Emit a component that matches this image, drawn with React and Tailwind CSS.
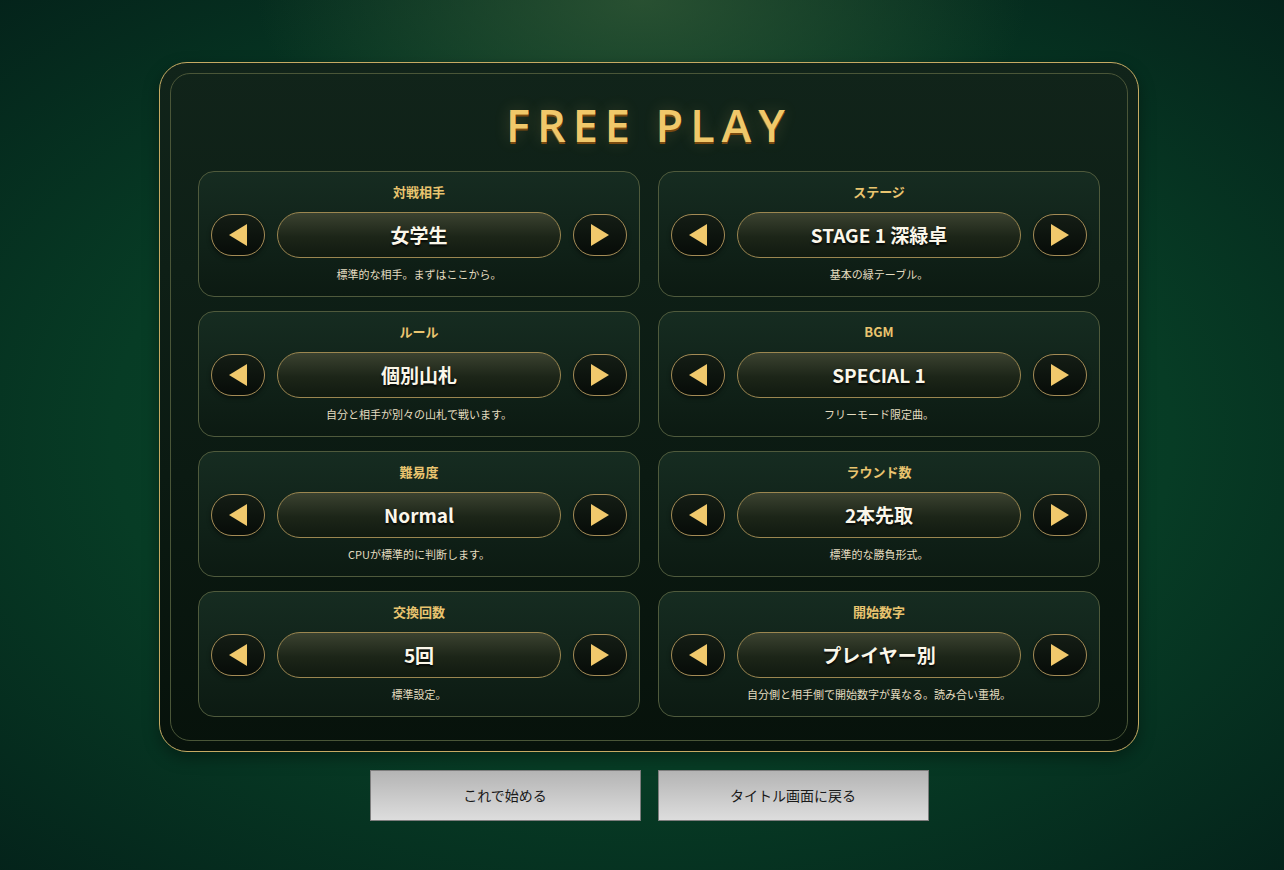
const OPTIONS = [
  { label: '対戦相手', value: '女学生', desc: '標準的な相手。まずはここから。' },
  { label: 'ステージ', value: 'STAGE 1 深緑卓', desc: '基本の緑テーブル。' },
  { label: 'ルール', value: '個別山札', desc: '自分と相手が別々の山札で戦います。' },
  { label: 'BGM', value: 'SPECIAL 1', desc: 'フリーモード限定曲。' },
  { label: '難易度', value: 'Normal', desc: 'CPUが標準的に判断します。' },
  { label: 'ラウンド数', value: '2本先取', desc: '標準的な勝負形式。' },
  { label: '交換回数', value: '5回', desc: '標準設定。' },
  { label: '開始数字', value: 'プレイヤー別', desc: '自分側と相手側で開始数字が異なる。読み合い重視。' },
];

function Arrow({ dir }) {
  return (
    <button className="flex h-[42px] w-[54px] shrink-0 items-center justify-center rounded-full border border-[#a48b55] bg-[linear-gradient(180deg,#141d15_0%,#070c08_100%)] shadow-[0_2px_4px_rgba(0,0,0,0.5)]">
      <svg width="22" height="24" viewBox="0 0 22 24">
        {dir === 'left' ? (
          <polygon points="20,1 20,23 2,12" fill="#f1c96c" />
        ) : (
          <polygon points="2,1 2,23 20,12" fill="#f1c96c" />
        )}
      </svg>
    </button>
  );
}

function OptionCard({ label, value, desc }) {
  return (
    <div className="flex h-[126px] flex-col items-center rounded-[16px] border border-[#4f5a3c] bg-[linear-gradient(180deg,#162c21_0%,#0c1a12_100%)] px-[12px] pt-[11px]">
      <div className="h-[18px] text-[13px] font-bold leading-[18px] text-[#e9c46f]">{label}</div>
      <div className="mt-[11px] flex w-full items-center gap-[12px]">
        <Arrow dir="left" />
        <div className="flex h-[46px] flex-1 items-center justify-center rounded-full border border-[#9b8650] bg-[linear-gradient(180deg,#3b4230_0%,#1c2518_55%,#111a10_100%)] text-[19px] font-bold text-[#fbf7ea] [text-shadow:0_2px_2px_rgba(0,0,0,0.8)]">
          {value}
        </div>
        <Arrow dir="right" />
      </div>
      <div className="mt-[8px] h-[16px] text-[11px] leading-[16px] text-[#e4dcc0]">{desc}</div>
    </div>
  );
}

export default function App() {
  return (
    <div
      className="flex min-h-[870px] w-full flex-col items-center bg-[radial-gradient(ellipse_30%_22%_at_50%_0%,rgba(52,90,55,0.75)_0%,rgba(52,90,55,0)_100%),radial-gradient(ellipse_75%_70%_at_50%_50%,#0a4a2d_0%,#073c25_55%,#04221a_100%)] pl-[14px] pt-[62px]"
      style={{ fontFamily: '"Noto Sans CJK JP", "Noto Sans", sans-serif' }}
    >
      <div className="w-[980px] rounded-[28px] border border-[#c6aa63] bg-[linear-gradient(180deg,#11241a_0%,#0b1a12_60%,#07120b_100%)] p-[10px] shadow-[0_6px_16px_rgba(0,0,0,0.35)]">
        <div className="rounded-[20px] border border-[#4a5638] px-[27px] pb-[23px] pt-[22px]">
          <h1
            className="text-center text-[45px] font-semibold leading-[58px] tracking-[0.155em] text-[#f0c86a] [text-shadow:0_2px_0_#7a4a10,0_0_16px_rgba(240,200,106,0.2)]"
            style={{ fontFamily: '"Open Sans", "Noto Sans", sans-serif' }}
          >
            FREE PLAY
          </h1>
          <div className="mt-[17px] grid grid-cols-2 gap-x-[18px] gap-y-[14px]">
            {OPTIONS.map((o) => (
              <OptionCard key={o.label} {...o} />
            ))}
          </div>
        </div>
      </div>
      <div className="mt-[18px] flex gap-[17px]">
        <button className="h-[51px] w-[271px] border border-[#7d7d7d] bg-[linear-gradient(180deg,#b4b4b4_0%,#dddddd_100%)] text-[14px] text-[#1a1a1a]">
          これで始める
        </button>
        <button className="h-[51px] w-[271px] border border-[#7d7d7d] bg-[linear-gradient(180deg,#b4b4b4_0%,#dddddd_100%)] text-[14px] text-[#1a1a1a]">
          タイトル画面に戻る
        </button>
      </div>
    </div>
  );
}
